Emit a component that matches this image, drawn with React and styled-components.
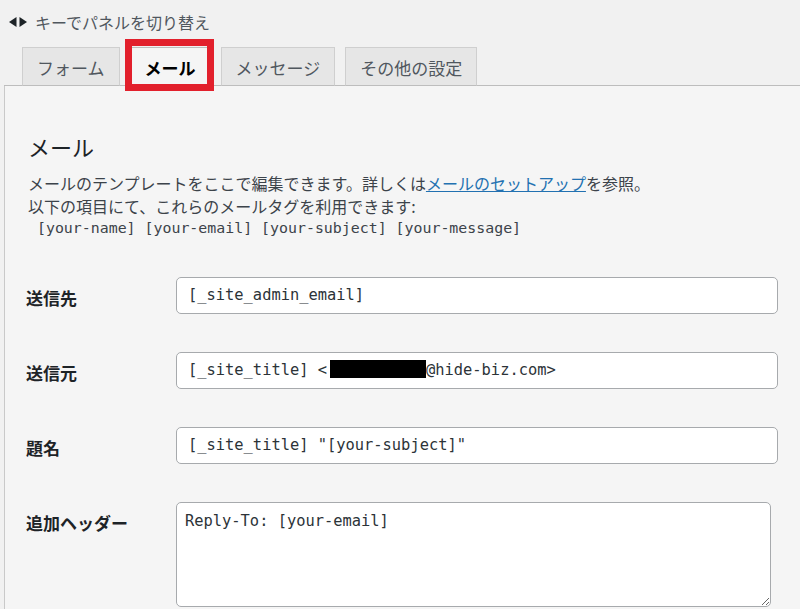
import React from 'react';
import styled, { createGlobalStyle } from 'styled-components';

const GlobalStyle = createGlobalStyle`
  html, body {
    margin: 0;
    padding: 0;
    overflow: hidden;
    background: #f1f1f1;
  }
  body {
    font-family: "Noto Sans CJK JP", "Noto Sans", sans-serif;
    color: #3c434a;
  }
`;

const Page = styled.div`
  width: 830px;
  padding-left: 4px;
`;

const Hint = styled.p`
  display: flex;
  align-items: center;
  gap: 8px;
  margin: 0;
  padding: 11px 0 0 5px;
  font-size: 16px;
  line-height: 22px;
  color: #50575e;
`;

const Tabs = styled.ul`
  display: flex;
  margin: 0;
  padding: 14px 0 0 13px;
  list-style: none;
  border-bottom: 1px solid #bdbdbd;
`;

const Tab = styled.li`
  position: relative;
  margin: 0 5px -1px;
  padding: 8px 14px 6px;
  font-size: 17px;
  line-height: 23px;
  border: 1px solid ${props => props.active ? '#bdbdbd' : '#cfcfcf'};
  border-bottom-color: ${props => props.active ? '#f5f5f5' : '#bdbdbd'};
  background: ${props => props.active ? '#f5f5f5' : '#e6e6e6'};
  color: ${props => props.active ? '#000' : '#50575e'};
  font-weight: ${props => props.active ? 700 : 400};
`;

// red annotation box drawn over the active tab
const Highlight = styled.span`
  position: absolute;
  top: -9px;
  left: -6px;
  right: -4px;
  bottom: -6px;
  border: 7px solid #e2202c;
  pointer-events: none;
`;

const Panel = styled.div`
  background: #f5f5f5;
  border-left: 1px solid #c9c9c9;
  padding: 46px 0 40px 23px;
`;

const Heading = styled.h2`
  margin: 0;
  font-size: 22px;
  font-weight: 400;
  line-height: 28px;
  color: #1d2327;
`;

const Description = styled.div`
  margin-top: 12px;
  font-size: 16px;
  line-height: 22.5px;
  color: #3c434a;
`;

const Link = styled.a`
  color: #2271b1;
  text-decoration: underline;
`;

const TagLine = styled.div`
  font-family: "DejaVu Sans Mono", "Liberation Mono", monospace;
  font-size: 14.9px;
  color: #3c434a;
`;

const FormTable = styled.div`
  display: grid;
  grid-template-columns: 150px 1fr;
  margin: 18px 0 0 -2px;
`;

const Label = styled.div`
  align-self: start;
  padding-top: 28px;
  font-size: 17px;
  line-height: 24px;
  font-weight: 700;
  color: #1d2327;
`;

const Cell = styled.div`
  padding: 19px 0;
`;

const fieldFont = `
  font-family: "DejaVu Sans Mono", "Liberation Mono", monospace;
  font-size: 15.4px;
  color: #2c3338;
  background: #fff;
  border: 1px solid #a7aaad;
  border-radius: 5px;
  box-sizing: border-box;
`;

const Field = styled.div`
  ${fieldFont}
  width: ${props => props.width}px;
  height: 37px;
  padding: 0 11px;
  line-height: 35px;
  white-space: pre;
  overflow: hidden;
`;

const Redacted = styled.span`
  display: inline-block;
  width: 96px;
  height: 18px;
  margin-left: 3px;
  vertical-align: -3px;
  background: #000;
`;

const TextArea = styled.textarea`
  ${fieldFont}
  display: block;
  width: ${props => props.width}px;
  height: 105px;
  margin: 0;
  padding: 7px 8px;
  line-height: 22px;
  outline: none;
`;

const ArrowIcon = () => (
  <svg width="18" height="10" viewBox="0 0 18 10">
    <polygon points="0,5 7.5,0 7.5,10" fill="#1d2327" />
    <polygon points="10.5,0 18,5 10.5,10" fill="#1d2327" />
  </svg>
);

const tabs = ['フォーム', 'メール', 'メッセージ', 'その他の設定'];

export default function App() {
  return (
    <Page>
      <GlobalStyle />
      <Hint>
        <ArrowIcon />
        キーでパネルを切り替え
      </Hint>
      <Tabs>
        {tabs.map(t => (
          <Tab key={t} active={t === 'メール'}>
            {t}
            {t === 'メール' && <Highlight />}
          </Tab>
        ))}
      </Tabs>
      <Panel>
        <Heading>メール</Heading>
        <Description>
          メールのテンプレートをここで編集できます。詳しくは<Link href="#">メールのセットアップ</Link>を参照。
          <br />
          以下の項目にて、これらのメールタグを利用できます:
          <TagLine>{'\u00a0[your-name] [your-email] [your-subject] [your-message]'}</TagLine>
        </Description>
        <FormTable>
          <Label>送信先</Label>
          <Cell>
            <Field width={602}>[_site_admin_email]</Field>
          </Cell>
          <Label>送信元</Label>
          <Cell>
            <Field width={602}>
              {'[_site_title] <'}
              <Redacted />
              {'@hide-biz.com>'}
            </Field>
          </Cell>
          <Label>題名</Label>
          <Cell>
            <Field width={602}>[_site_title] "[your-subject]"</Field>
          </Cell>
          <Label>追加ヘッダー</Label>
          <Cell>
            <TextArea width={595} defaultValue="Reply-To: [your-email]" />
          </Cell>
        </FormTable>
      </Panel>
    </Page>
  );
}
